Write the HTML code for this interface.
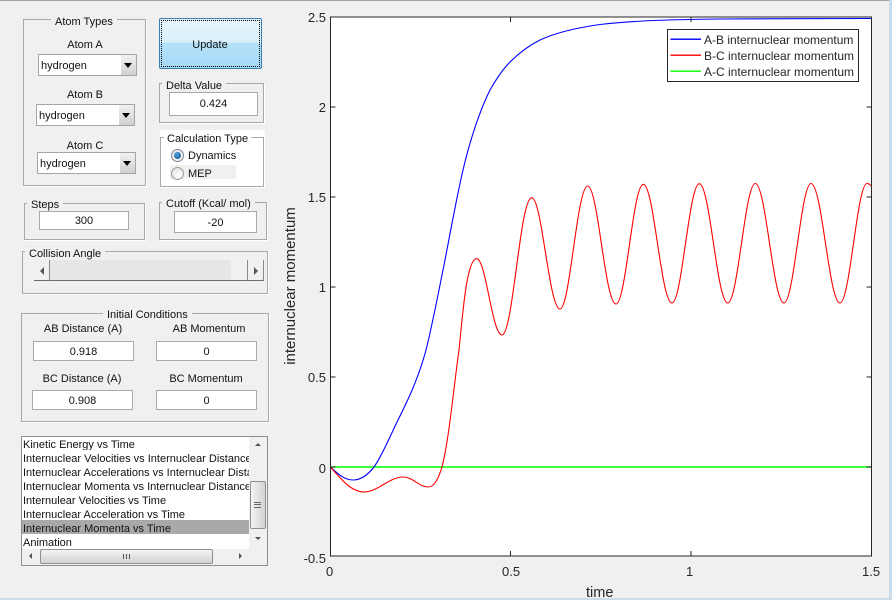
<!DOCTYPE html>
<html><head><meta charset="utf-8"><style>
html,body{margin:0;padding:0;width:892px;height:600px;overflow:hidden;background:#f0f0f0}
body{position:relative;font-family:"Liberation Sans",Arial,sans-serif;font-size:11px;color:#111}
div{box-sizing:border-box}
.a{position:absolute}
.t{position:absolute;white-space:nowrap;line-height:14px;height:14px;margin-top:1px}
.c{text-align:center;width:140px}
.g{position:absolute;border:1px solid #a8a8a8;box-shadow:1px 1px 0 #fff}
.gt{position:absolute;white-space:nowrap;line-height:14px;height:14px;background:#f0f0f0;padding:0 4px;margin-top:1px}
.i{position:absolute;background:#fff;border:1px solid #a9a9a9;text-align:center;line-height:19px;padding-top:1px}
.p{position:absolute;background:#fff;border:1px solid #a5a5a5;height:22px;line-height:20px;padding-left:2px;padding-top:1px}
.p i{position:absolute;right:0;top:0;width:15px;height:20px;background:linear-gradient(#f1f1f1,#d0d0d0)}
.p i:after{content:"";position:absolute;left:3px;top:8px;border-left:4.5px solid transparent;border-right:4.5px solid transparent;border-top:5px solid #000}
.r{position:absolute;width:13px;height:13px;border-radius:50%;border:1px solid #9a9a9a;background:radial-gradient(circle at 60% 65%,#fff,#dcdcdc)}
.l{position:absolute;left:0;width:227px;height:14px;line-height:18px;white-space:nowrap;overflow:hidden;padding-left:1px;font-size:11px}
.k{font-size:13px;color:#262626;position:absolute;white-space:nowrap;line-height:14px;margin-top:1px}
</style></head><body>
<div class="a" style="left:0;top:0;width:892px;height:1px;background:#a3a3a3"></div>
<div class="a" style="left:889px;top:0;width:3px;height:600px;background:#c9dcec"></div>
<div class="a" style="left:0;top:598px;width:892px;height:2px;background:#c9dcec"></div>

<div class="g" style="left:23px;top:19px;width:123px;height:167px"></div>
<div class="gt" style="left:51px;top:14px">Atom Types</div>
<div class="t c" style="left:15px;top:37px">Atom A</div>
<div class="p" style="left:38px;top:54px;width:99px">hydrogen<i></i></div>
<div class="t c" style="left:15px;top:87px">Atom B</div>
<div class="p" style="left:36px;top:104px;width:99px">hydrogen<i></i></div>
<div class="t c" style="left:15px;top:138px">Atom C</div>
<div class="p" style="left:37px;top:152px;width:99px">hydrogen<i></i></div>

<div class="a" style="left:159px;top:18px;width:103px;height:51px;border:1px solid #3c7fb1;border-radius:2px;background:linear-gradient(#e6f5fd 0%,#d8effb 48%,#b4e1f9 49%,#a6d9f6 100%)"></div>
<div class="a" style="left:161px;top:20px;width:99px;height:47px;border:1px dotted #000"></div>
<div class="t c" style="left:140px;top:37px">Update</div>

<div class="g" style="left:159px;top:83px;width:105px;height:40px"></div>
<div class="gt" style="left:162px;top:78px">Delta Value</div>
<div class="i" style="left:169px;top:92px;width:89px;height:24px;line-height:21px">0.424</div>

<div class="a" style="left:160px;top:130px;width:105px;height:58px;background:#fff"></div>
<div class="a" style="left:160px;top:137px;width:104px;height:50px;border:1px solid #a8a8a8"></div>
<div class="gt" style="left:164px;top:131px;background:#fff;padding:0 3px">Calculation Type</div>
<div class="a" style="left:170px;top:165px;width:66px;height:14px;background:#f0f0f0"></div>
<div class="r" style="left:171px;top:149px;border-color:#7a8a9a"></div>
<div class="a" style="left:174px;top:152px;width:7px;height:7px;border-radius:50%;background:radial-gradient(circle at 40% 35%,#4ea5dc,#0a4f86)"></div>
<div class="t" style="left:188px;top:148px">Dynamics</div>
<div class="r" style="left:171px;top:167px"></div>
<div class="t" style="left:188px;top:166px">MEP</div>

<div class="g" style="left:24px;top:203px;width:121px;height:37px"></div>
<div class="gt" style="left:27px;top:197px">Steps</div>
<div class="i" style="left:39px;top:211px;width:90px;height:19px;line-height:16px">300</div>

<div class="g" style="left:159px;top:202px;width:108px;height:38px"></div>
<div class="gt" style="left:162px;top:196px">Cutoff (Kcal/ mol)</div>
<div class="i" style="left:174px;top:211px;width:83px;height:22px;line-height:20px">-20</div>

<div class="g" style="left:22px;top:251px;width:246px;height:43px"></div>
<div class="gt" style="left:25px;top:246px">Collision Angle</div>
<div class="a" style="left:34px;top:260px;width:230px;height:21px;background:#e6e6e6;border-bottom:1px solid #6b6b6b"></div>
<div class="a" style="left:34px;top:260px;width:16px;height:21px;background:#f0f0f0;border-right:1px solid #8a8a8a;border-bottom:1px solid #6b6b6b"></div>
<div class="a" style="left:231px;top:260px;width:17px;height:21px;background:#f0f0f0;border-right:1px solid #8a8a8a;border-bottom:1px solid #6b6b6b"></div>
<div class="a" style="left:248px;top:260px;width:16px;height:21px;background:#f0f0f0;border-right:1px solid #8a8a8a;border-bottom:1px solid #6b6b6b"></div>
<div class="a" style="left:40px;top:267px;border-top:4px solid transparent;border-bottom:4px solid transparent;border-right:4px solid #555"></div>
<div class="a" style="left:254px;top:267px;border-top:4px solid transparent;border-bottom:4px solid transparent;border-left:4px solid #555"></div>

<div class="g" style="left:21px;top:313px;width:248px;height:109px"></div>
<div class="gt" style="left:103px;top:307px">Initial Conditions</div>
<div class="t c" style="left:13px;top:321px">AB Distance (A)</div>
<div class="t c" style="left:139px;top:321px">AB Momentum</div>
<div class="i" style="left:33px;top:341px;width:101px;height:20px">0.918</div>
<div class="i" style="left:156px;top:341px;width:101px;height:20px">0</div>
<div class="t c" style="left:12px;top:371px">BC Distance (A)</div>
<div class="t c" style="left:136px;top:371px">BC Momentum</div>
<div class="i" style="left:32px;top:390px;width:101px;height:20px">0.908</div>
<div class="i" style="left:156px;top:390px;width:101px;height:20px">0</div>

<div class="a" style="left:21px;top:436px;width:247px;height:130px;background:#fff;border:1px solid #8a8f96;overflow:hidden">
 <div class="l" style="top:-1px">Kinetic Energy vs Time</div>
 <div class="l" style="top:13px">Internuclear Velocities vs Internuclear Distance</div>
 <div class="l" style="top:27px">Internuclear Accelerations vs Internuclear Distance</div>
 <div class="l" style="top:41px">Internuclear Momenta vs Internuclear Distance</div>
 <div class="l" style="top:55px">Internulear Velocities vs Time</div>
 <div class="l" style="top:69px">Internuclear Acceleration vs Time</div>
 <div class="l" style="top:83px;background:#a9a9a9">Internuclear Momenta vs Time</div>
 <div class="l" style="top:97px">Animation</div>
 <div class="a" style="left:227px;top:0;width:18px;height:112px;background:#f0f0f0"></div>
 <div class="a" style="left:0;top:112px;width:245px;height:16px;background:#f0f0f0"></div>
 <div class="a" style="left:228px;top:44px;width:16px;height:48px;border:1px solid #8f8f8f;border-radius:2px;background:linear-gradient(90deg,#f4f4f4,#d2d2d2)"></div>
 <div class="a" style="left:232px;top:65px;width:7px;height:6px;border-top:1px solid #666;border-bottom:1px solid #666"></div>
 <div class="a" style="left:232px;top:67px;width:7px;height:1px;background:#666"></div>
 <div class="a" style="left:233px;top:100px;border-left:3px solid transparent;border-right:3px solid transparent;border-top:3px solid #555"></div>
 <div class="a" style="left:233px;top:6px;border-left:3px solid transparent;border-right:3px solid transparent;border-bottom:3px solid #555"></div>
 <div class="a" style="left:18px;top:112px;width:173px;height:15px;border:1px solid #8f8f8f;border-radius:2px;background:linear-gradient(#f4f4f4,#d2d2d2)"></div>
 <div class="a" style="left:101px;top:117px;width:7px;height:5px;background:repeating-linear-gradient(90deg,#555 0 1px,transparent 1px 3px)"></div>
 <div class="a" style="left:7px;top:116px;border-top:3.5px solid transparent;border-bottom:3.5px solid transparent;border-right:3.5px solid #555"></div>
 <div class="a" style="left:217px;top:116px;border-top:3.5px solid transparent;border-bottom:3.5px solid transparent;border-left:3.5px solid #555"></div>
</div>

<svg class="a" style="left:0;top:0" width="892" height="600" viewBox="0 0 892 600">
 <rect x="330.5" y="17" width="541" height="539" fill="#fff"/>
 <path d="M330.5 467H871.5" stroke="#00ff00" stroke-width="1.4" fill="none"/>
 <path fill="none" stroke="#0000ff" stroke-width="1.1" d="M330.5 467C337 473 344 480 353 480C360 480 367 476 374 467C382 456 391 434 398 420C406 404 418 380 426 350C432 326 438 295 443 270C450 235 456 200 463 170C470 140 480 110 490 90C498 76 504 68 510 62C520 52 530 45 540 40C555 33 575 28 600 24.5C640 20 680 19.5 720 19L871 18.5"/>
 <path fill="none" stroke="#ff0000" stroke-width="1.1" d="M330.5 467C340 478 351 492 364 492C378 492 389 477 403 477C413 477 419 487 428 487C434 487 438 480 442 467C449 440 454 385 459 350C463 310 467 258.7 476.7 258.7C486 258.7 492 335 502 335C513 335 520 197.7 531.7 197.7C542 197.7 549 309 560 309C570 309 577 186 587.7 186C598 186 605 304 616 304C626 304 633 184.3 643.3 184.3C654 184.3 661 303 672 303C682 303 689 183.7 699.3 183.7C710 183.7 717 303 727.7 303C738 303 745 183.5 755.3 183.5C766 183.5 773 303 784 303C794 303 801 183.5 811 183.5C822 183.5 829 303 840 303C850 303 857 183.5 867 183.5C869 183.5 870 184.5 871 186"/>
 <rect x="330.5" y="17" width="541" height="539" fill="none" stroke="#262626" stroke-width="1"/>
 <path stroke="#262626" stroke-width="1" fill="none" d="M510.5 556v-5M691 556v-5M510.5 17v5M691 17v5M330.5 107h5M330.5 197h5M330.5 287h5M330.5 377h5M330.5 467h5M871.5 107h-5M871.5 197h-5M871.5 287h-5M871.5 377h-5M871.5 467h-5"/>
 <rect x="667.5" y="29.5" width="191" height="52" fill="#fff" stroke="#262626" stroke-width="1"/>
 <rect x="670.5" y="38.5" width="30.5" height="1.4" fill="#0000ff"/>
 <rect x="670.5" y="54.5" width="30.5" height="1.4" fill="#ff0000"/>
 <rect x="670.5" y="70.5" width="30.5" height="1.4" fill="#00ff00"/>
 <text x="704" y="44" font-family="Liberation Sans" font-size="12" fill="#262626">A-B internuclear momentum</text>
 <text x="704" y="60" font-family="Liberation Sans" font-size="12" fill="#262626">B-C internuclear momentum</text>
 <text x="704" y="76" font-family="Liberation Sans" font-size="12" fill="#262626">A-C internuclear momentum</text>
 <text transform="translate(295 286) rotate(-90)" text-anchor="middle" font-family="Liberation Sans" font-size="15" fill="#262626">internuclear momentum</text>
</svg>

<div class="k" style="right:566px;top:10px">2.5</div>
<div class="k" style="right:566px;top:100px">2</div>
<div class="k" style="right:566px;top:190px">1.5</div>
<div class="k" style="right:566px;top:280px">1</div>
<div class="k" style="right:566px;top:370px">0.5</div>
<div class="k" style="right:566px;top:461px">0</div>
<div class="k" style="right:566px;top:551px">-0.5</div>
<div class="k" style="left:326px;top:564px">0</div>
<div class="k" style="left:502px;top:564px">0.5</div>
<div class="k" style="left:686px;top:564px">1</div>
<div class="k" style="left:862px;top:564px">1.5</div>
<div class="k" style="left:586px;top:585px;font-size:14.5px">time</div>
</body></html>
